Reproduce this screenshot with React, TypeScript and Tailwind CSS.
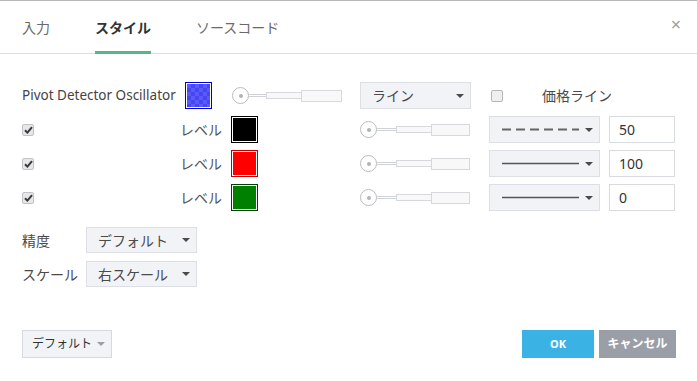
import React from 'react';

const Arrow = ({ light }: { light?: boolean }) => (
    <span
        className={`inline-block w-0 h-0 border-l-[4px] border-r-[4px] border-t-[4px] border-l-transparent border-r-transparent ${light ? 'border-t-[#9a9ea6]' : 'border-t-[#4a4a4a]'}`}
    />
);

const Slider = ({ wide }: { wide?: boolean }) => (
    <div className="flex items-center w-[110px] h-[17px]">
        <div className="w-[17px] h-[17px] rounded-full border border-[#b9bcc2] bg-white flex items-center justify-center shrink-0">
            <div className="w-[4px] h-[4px] rounded-full bg-[#b0b3b9]" />
        </div>
        <div className={`${wide ? 'w-[18px]' : 'w-[20px]'} h-[3px] border-y border-[#cfd2d6] bg-white`} />
        <div className="w-[36px] h-[7px] border border-[#d6d8dc] bg-[#f8f8f8] -ml-px" />
        <div className="flex-1 h-[12px] border border-[#d6d8dc] bg-[#f8f8f8] -ml-px" />
    </div>
);

const Swatch = ({ outer, inner }: { outer: string; inner: string }) => (
    <div className={`w-[27px] h-[27px] border ${outer} p-px bg-white shrink-0`}>
        <div className={`w-full h-full ${inner}`} />
    </div>
);

const CheckBox = ({ checked }: { checked?: boolean }) =>
    checked ? (
        <div className="w-[12px] h-[12px] rounded-[2px] border border-[#bfc2c6] bg-[#e6e7e9] flex items-center justify-center">
            <svg width="9" height="8" viewBox="0 0 9 8">
                <path d="M1 4.2 L3.4 6.6 L8 1.2" stroke="#3a3a3a" strokeWidth="2" fill="none" />
            </svg>
        </div>
    ) : (
        <div className="w-[12px] h-[12px] rounded-[2px] border border-[#b3b6bb] bg-[#eeeff1]" />
    );

const Select = ({ children, w }: { children: React.ReactNode; w: string }) => (
    <div className={`${w} h-[27px] border border-[#dcdfe3] bg-[#f1f3f6] flex items-center justify-between pl-[11px] pr-[6px] text-[#4a4a4a] text-[14px]`}>
        <span className="flex-1 flex items-center">{children}</span>
        <Arrow />
    </div>
);

const levels = [
    { outer: 'border-black', inner: 'bg-black', dashed: true, value: '50' },
    { outer: 'border-[#c00000]', inner: 'bg-[#ff0000]', dashed: false, value: '100' },
    { outer: 'border-[#004000]', inner: 'bg-[#008000]', dashed: false, value: '0' },
];

export default function App() {
    return (
        <div className="w-[697px] h-[381px] bg-white border-t border-[#b8b8b8] flex flex-col font-['Noto_Sans','Noto_Sans_CJK_JP',sans-serif] text-[#4a4a4a]">
            <div className="h-[53px] border-b border-[#dedede] flex items-stretch pl-[22px] pr-[16px] text-[14px] shrink-0">
                <div className="flex items-center text-[#6a6a6a] mr-[45px]">入力</div>
                <div className="flex items-center font-bold text-[#333] border-b-[3px] border-[#53b987] pt-[3px] mr-[45px] -mb-px">スタイル</div>
                <div className="flex items-center text-[#6a6a6a]">ソースコード</div>
                <div className="ml-auto flex items-center text-[#9a9ea4] text-[18px] pb-[6px]">×</div>
            </div>

            <div className="pl-[22px] pt-[28px] text-[14px]">
                <div className="flex items-center h-[27px]">
                    <div className="w-[163px] text-[13.5px] text-[#444]">Pivot Detector Oscillator</div>
                    <Swatch
                        outer="border-[#0000d0]"
                        inner="bg-[repeating-conic-gradient(#4646f2_0%_25%,#5a5af8_0%_50%)] bg-[length:8px_8px]"
                    />
                    <div className="ml-[20px]">
                        <Slider wide />
                    </div>
                    <div className="ml-[18px]">
                        <Select w="w-[111px]">ライン</Select>
                    </div>
                    <div className="ml-[20px]">
                        <CheckBox />
                    </div>
                    <div className="ml-[39px]">価格ライン</div>
                </div>

                {levels.map((lv, i) => (
                    <div key={i} className="flex items-center h-[27px] mt-[7px]">
                        <div className="w-[200px] flex items-center justify-between">
                            <CheckBox checked />
                            <span className="text-[#555]">レベル</span>
                        </div>
                        <div className="ml-[9px]">
                            <Swatch outer={lv.outer} inner={lv.inner} />
                        </div>
                        <div className="ml-[102px]">
                            <Slider />
                        </div>
                        <div className="ml-[19px]">
                            <Select w="w-[111px]">
                                <svg width="78" height="3" viewBox="0 0 78 3">
                                    {lv.dashed ? (
                                        <line x1="1" y1="1.5" x2="78" y2="1.5" stroke="#666" strokeWidth="2" strokeDasharray="9 5" />
                                    ) : (
                                        <line x1="1" y1="1.5" x2="78" y2="1.5" stroke="#555" strokeWidth="1.5" />
                                    )}
                                </svg>
                            </Select>
                        </div>
                        <div className="ml-[9px] w-[66px] h-[27px] border border-[#d8dbdf] flex items-center pl-[9px] text-[#333]">
                            {lv.value}
                        </div>
                    </div>
                ))}

                <div className="flex items-center h-[26px] mt-[16px]">
                    <div className="w-[64px]">精度</div>
                    <Select w="w-[111px] !h-[26px]">デフォルト</Select>
                </div>
                <div className="flex items-center h-[26px] mt-[8px]">
                    <div className="w-[64px]">スケール</div>
                    <Select w="w-[111px] !h-[26px]">右スケール</Select>
                </div>
            </div>

            <div className="mt-auto flex items-center pl-[22px] pr-[21px] pb-[23px]">
                <div className="w-[90px] h-[28px] border border-[#d6d9dd] bg-[#f1f3f6] flex items-center pl-[9px] gap-[5px] text-[12px] text-[#333]">
                    <span>デフォルト</span>
                    <Arrow light />
                </div>
                <div className="ml-auto w-[72px] h-[28px] bg-[#3bb2e4] text-white font-bold text-[11px] flex items-center justify-center">
                    OK
                </div>
                <div className="ml-[5px] w-[77px] h-[28px] bg-[#9a9ea7] text-white font-bold text-[12px] flex items-center justify-center">
                    キャンセル
                </div>
            </div>
        </div>
    );
}
